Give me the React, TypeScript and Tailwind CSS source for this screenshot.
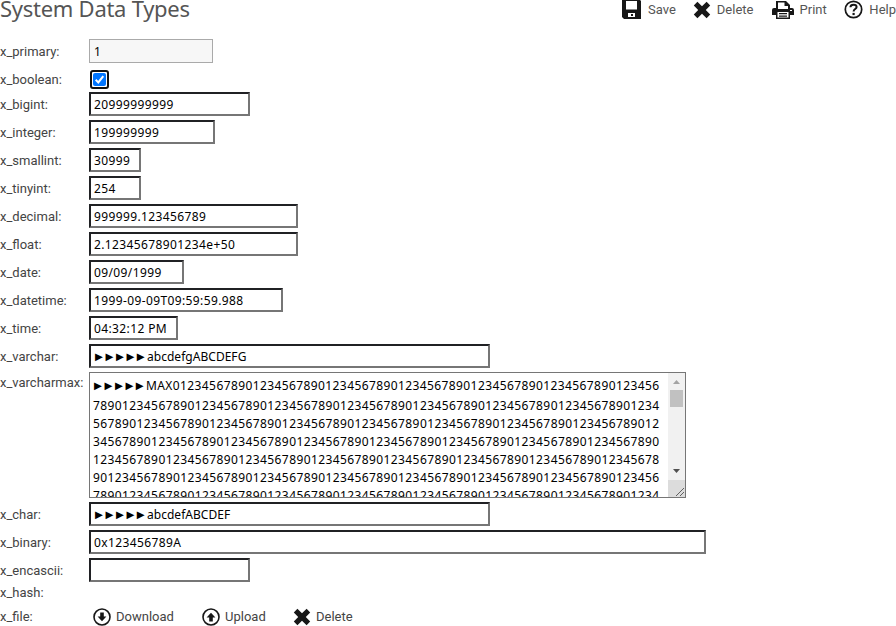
import React from 'react';

const valueFont = "font-['Noto_Sans','DejaVu_Sans',sans-serif] text-[12px] text-black";

function Arrows() {
  return (
    <span className="-ml-[1.5px] inline-block h-[14px] w-[54.5px] shrink-0 whitespace-nowrap font-['Liberation_Sans',sans-serif] text-[13px] leading-[14px] tracking-[-2.4px]">
      ►►►►►
    </span>
  );
}

function Label({ children }: { children: string }) {
  return <div className="w-[89px] shrink-0 whitespace-nowrap">{children}</div>;
}

function Field({ label, width, arrows, value }: { label: string; width: string; arrows?: boolean; value: string }) {
  return (
    <div className="mb-1 flex h-6 shrink-0 items-center">
      <div className="pt-px"><Label>{label}</Label></div>
      <div className={`flex h-6 items-center whitespace-pre border-2 border-t-[#202124] border-l-[#202124] border-r-[#767676] border-b-[#767676] bg-white pt-px pl-[3px] ${width} ${valueFont}`}>
        {arrows && <Arrows />}
        <span className={arrows ? 'tracking-[0.03px]' : 'tracking-[0.38px]'}>{value}</span>
      </div>
    </div>
  );
}

function Cross() {
  return (
    <svg className="h-[18px] w-[18px] shrink-0" viewBox="0 0 18 18" fill="#171717">
      <path d="M4.4 .8 9 5.2 13.6 .8 17.2 4.4 12.8 9 17.2 13.6 13.6 17.2 9 12.8 4.4 17.2 .8 13.6 5.2 9 .8 4.4Z" />
    </svg>
  );
}

function SaveIcon() {
  return (
    <svg className="h-[19px] w-[19px] shrink-0" viewBox="0 0 19 19">
      <path fill="#171717" d="M0 0H18L19 1V19H2L0 17Z" />
      <path fill="#fff" d="M4 1h11v8.5H4Z" />
      <path fill="#fff" d="M6 13h7v4H6Z" />
      <path fill="#171717" d="M9 14h2v2H9Z" />
    </svg>
  );
}

function PrintIcon() {
  return (
    <svg className="h-[20px] w-[22px] shrink-0" viewBox="0 0 22 20">
      <path fill="#171717" d="M4 1H14L18 5V8H20Q22 8 22 10V15H18V19H4V15H0V10Q0 8 2 8H4Z" />
      <path fill="#fff" d="M6 2.5H12.5V6H16V9H6Z M5.5 12H16.5V17.5H5.5Z" />
      <path fill="#171717" d="M7 13h8v1.3H7Z M7 15.5h8v1.2H7Z" />
      <path fill="#fff" d="M18 10h2v1h-2Z" />
    </svg>
  );
}

function HelpIcon() {
  return (
    <svg className="h-[19px] w-[19px] shrink-0" viewBox="0 0 19 19" fill="none" stroke="#171717">
      <circle cx="9.5" cy="9.5" r="8.2" strokeWidth="1.7" />
      <path d="M6.4 7.2C6.6 3.8 12.6 3.9 12.6 7.1C12.6 9 9.6 9.1 9.6 11.4" strokeWidth="2" />
      <path d="M8.5 14h2.2" strokeWidth="2.2" />
    </svg>
  );
}

function CircleArrow({ up }: { up?: boolean }) {
  return (
    <svg className={`h-[18px] w-[18px] shrink-0 ${up ? 'rotate-180' : ''}`} viewBox="0 0 18 18">
      <circle cx="9" cy="9" r="8" fill="none" stroke="#171717" strokeWidth="1.6" />
      <path fill="#171717" d="M7.2 4.5h3.6V8.6h2.6L9 13.3 4.6 8.6h2.6Z" />
    </svg>
  );
}

const lines = [7, 5, 3, 1, 9, 7].map((start) =>
  Array.from({ length: 78 }, (_, i) => (start + i) % 10).join('')
);
const firstLine = Array.from({ length: 67 }, (_, i) => i % 10).join('');

export default function App() {
  return (
    <main className="flex h-[626px] w-[896px] flex-col overflow-hidden bg-white font-['Roboto',sans-serif] text-[13px] leading-[16px] text-[#444]">
      <header className="flex h-[39px] shrink-0 items-start justify-between">
        <h1 className="-mt-[5px] whitespace-nowrap font-['Noto_Sans',sans-serif] text-[22px] leading-[26px] tracking-[-0.27px] text-[#555]">System Data Types</h1>
        <nav className="flex h-[19px] w-[274px] shrink-0 items-center whitespace-nowrap text-[#555]">
          <div className="flex w-[71px] items-center gap-[7px]"><SaveIcon /><span>Save</span></div>
          <div className="flex w-[79px] items-center gap-[6px]"><Cross /><span>Delete</span></div>
          <div className="flex w-[73px] items-center gap-[6px]"><PrintIcon /><span>Print</span></div>
          <div className="flex items-center gap-[6px]"><HelpIcon /><span>Help</span></div>
        </nav>
      </header>

      <div className="flex h-6 shrink-0 items-center">
        <div className="pt-px"><Label>x_primary:</Label></div>
        <div className={`flex h-6 w-[124px] items-center border border-[#aaa] bg-[#f7f7f7] pt-px pl-1 ${valueFont}`}>1</div>
      </div>
      <div className="flex h-[29px] shrink-0 items-center pt-[4px]">
        <Label>x_boolean:</Label>
        <div className="ml-px flex h-[19px] w-[19px] items-center justify-center rounded-[3px] border-2 border-[#101010] bg-white">
          <div className="flex h-[13px] w-[13px] items-center justify-center rounded-[2px] bg-[#0075ff]">
            <svg className="h-[13px] w-[13px]" viewBox="0 0 13 13" fill="none" stroke="#fff" strokeWidth="2"><path d="m2.7 6.8 2.6 2.6 5-6.3" /></svg>
          </div>
        </div>
      </div>

      <Field label="x_bigint:" width="w-[161px]" value="20999999999" />
      <Field label="x_integer:" width="w-[126px]" value="199999999" />
      <Field label="x_smallint:" width="w-[52px]" value="30999" />
      <Field label="x_tinyint:" width="w-[52px]" value="254" />
      <Field label="x_decimal:" width="w-[209px]" value="999999.123456789" />
      <Field label="x_float:" width="w-[209px]" value="2.12345678901234e+50" />
      <Field label="x_date:" width="w-[95px]" value="09/09/1999" />
      <Field label="x_datetime:" width="w-[194px]" value="1999-09-09T09:59:59.988" />
      <Field label="x_time:" width="w-[89px]" value="04:32:12 PM" />
      <Field label="x_varchar:" width="w-[401px]" arrows value="abcdefgABCDEFG" />

      <div className="mb-1 flex h-[126px] shrink-0 items-start">
        <div className="pt-[3px]"><Label>x_varcharmax:</Label></div>
        <div className="flex h-[126px] w-[597px] overflow-hidden border border-[#767676] bg-white">
          <div className={`w-[578px] shrink-0 overflow-hidden whitespace-nowrap pl-[3px] pt-[2px] tracking-[0.4px] ${valueFont}`}>
            <div className="mb-px flex h-[21px] items-center"><Arrows /><span>MAX{firstLine}</span></div>
            {lines.map((line, i) => <div key={i} className="h-[18px] leading-[18px]">{line}</div>)}
          </div>
          <div className="flex w-[17px] flex-col items-center bg-[#f1f1f1]">
            <svg className="h-[17px] w-[17px]" viewBox="0 0 17 17"><path fill="#a3a3a3" d="M5 11h7L8.5 7Z" /></svg>
            <div className="h-[17px] w-[13px] bg-[#c1c1c1]" />
            <div className="flex-1" />
            <svg className="h-[17px] w-[17px]" viewBox="0 0 17 17"><path fill="#505050" d="M5 6h7L8.5 10Z" /></svg>
            <svg className="h-[17px] w-[17px] bg-[#dcdcdc]" viewBox="0 0 17 17"><path d="m8 16 8-8m-4 8 4-4" stroke="#606060" /></svg>
          </div>
        </div>
      </div>

      <Field label="x_char:" width="w-[401px]" arrows value="abcdefABCDEF" />
      <Field label="x_binary:" width="w-[617px]" value="0x123456789A" />
      <Field label="x_encascii:" width="w-[161px]" value="" />
      <div className="flex h-[14px] shrink-0 items-center"><Label>x_hash:</Label></div>
      <div className="mt-[8px] flex h-[18px] shrink-0 items-center">
        <Label>x_file:</Label>
        <div className="ml-[4px] flex w-[109px] items-center gap-[5px]"><CircleArrow /><span>Download</span></div>
        <div className="flex w-[91px] items-center gap-[5px]"><CircleArrow up /><span>Upload</span></div>
        <div className="flex items-center gap-[5px]"><Cross /><span>Delete</span></div>
      </div>
    </main>
  );
}
